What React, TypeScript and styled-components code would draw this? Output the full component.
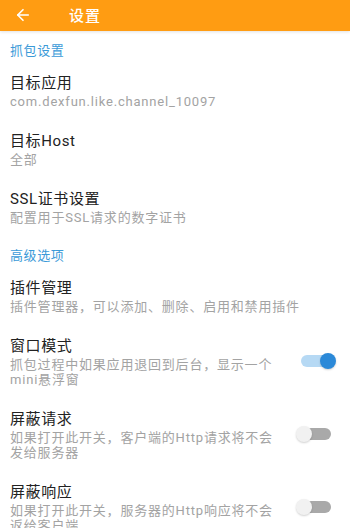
import React from 'react'
import styled, { createGlobalStyle } from 'styled-components'
import { ArrowLeft } from 'lucide-react'

const GlobalStyle = createGlobalStyle`
  html, body {
    margin: 0;
    padding: 0;
    background: #fff;
  }
  body {
    font-family: Roboto, "Noto Sans CJK SC", sans-serif;
    -webkit-font-smoothing: antialiased;
  }
`

const Page = styled.div`
  width: 350px;
  height: 528px;
  overflow: hidden;
  background: #fff;
`

const Toolbar = styled.header`
  height: 31px;
  background: #ff9c12;
  display: flex;
  align-items: center;
  padding: 0 0 2px 14px;
  box-sizing: border-box;
  box-shadow: 0 1px 3px rgba(0, 0, 0, 0.12);
  color: #fff;
`

const Title = styled.h1`
  margin: 0 0 0 37px;
  font-size: 15px;
  font-weight: 500;
  letter-spacing: 1px;
`

const SectionHeader = styled.div`
  padding: 9px 10px 0;
  line-height: 22px;
  font-size: 13px;
  color: #3b9ad8;
  letter-spacing: 0.6px;
`

const Row = styled.div`
  display: flex;
  align-items: center;
  padding: 10px 14px 11px 10px;
`

const Texts = styled.div<{ $narrow?: boolean }>`
  flex: ${({ $narrow }) => ($narrow ? '0 1 272px' : '1')};
  min-width: 0;
`

const ItemTitle = styled.div`
  font-size: 15px;
  line-height: 22px;
  color: #222;
  letter-spacing: 0.6px;
`

const ItemSub = styled.div`
  font-size: 13px;
  line-height: 15px;
  color: #a3a3a3;
  letter-spacing: 0.8px;
`

const Switch = styled.div<{ $on?: boolean }>`
  position: relative;
  margin-left: auto;
  width: 40px;
  height: 16px;
  flex-shrink: 0;
`

const Track = styled.div<{ $on?: boolean }>`
  position: absolute;
  left: 5px;
  right: 5px;
  top: 2px;
  height: 12px;
  border-radius: 6px;
  background: ${({ $on }) => ($on ? '#b6d9f4' : '#a9a9a9')};
`

const Thumb = styled.div<{ $on?: boolean }>`
  position: absolute;
  top: 0;
  ${({ $on }) => ($on ? 'right: 0;' : 'left: 0;')}
  width: 16px;
  height: 16px;
  border-radius: 50%;
  background: ${({ $on }) => ($on ? '#2b89d8' : '#f1f1f1')};
  box-shadow: 0 1px 2px rgba(0, 0, 0, 0.18);
`

type ItemProps = {
  title: string
  sub: string
  toggle?: 'on' | 'off'
}

const Item: React.FC<ItemProps> = ({ title, sub, toggle }) => (
  <Row>
    <Texts $narrow={!!toggle}>
      <ItemTitle>{title}</ItemTitle>
      <ItemSub>{sub}</ItemSub>
    </Texts>
    {toggle && (
      <Switch>
        <Track $on={toggle === 'on'} />
        <Thumb $on={toggle === 'on'} />
      </Switch>
    )}
  </Row>
)

const App: React.FC = () => (
  <Page>
    <GlobalStyle />
    <Toolbar>
      <ArrowLeft size={18} strokeWidth={2.2} />
      <Title>设置</Title>
    </Toolbar>
    <SectionHeader>抓包设置</SectionHeader>
    <Item title="目标应用" sub="com.dexfun.like.channel_10097" />
    <Item title="目标Host" sub="全部" />
    <Item title="SSL证书设置" sub="配置用于SSL请求的数字证书" />
    <SectionHeader>高级选项</SectionHeader>
    <Item title="插件管理" sub="插件管理器，可以添加、删除、启用和禁用插件" />
    <Item title="窗口模式" sub="抓包过程中如果应用退回到后台，显示一个mini悬浮窗" toggle="on" />
    <Item title="屏蔽请求" sub="如果打开此开关，客户端的Http请求将不会发给服务器" toggle="off" />
    <Item title="屏蔽响应" sub="如果打开此开关，服务器的Http响应将不会返给客户端" toggle="off" />
  </Page>
)

export default App
